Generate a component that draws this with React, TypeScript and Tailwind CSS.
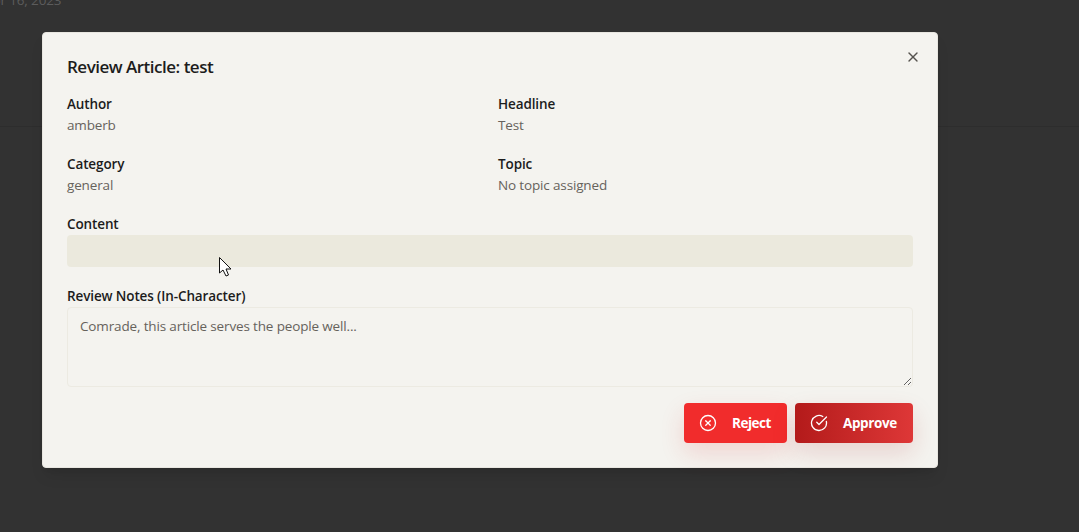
import { X, CircleX, CircleCheckBig } from "lucide-react";

function Field({ label, value }: { label: string; value: string }) {
  return (
    <div className="h-11">
      <div className="text-[13.5px] leading-[20px] font-semibold tracking-[-0.12px] text-[#1c1c1c]">{label}</div>
      <div className="mt-[1px] text-[13.5px] leading-[20px] tracking-[-0.15px] text-[#66625c]">{value}</div>
    </div>
  );
}

export default function App() {
  return (
    <div className="relative h-[532px] w-[1079px] overflow-hidden bg-[#323232] font-['Open_Sans']">
      <div className="flex h-[127px] flex-col border-b border-[#2d2d2d]">
        <div className="-mt-[10px] -ml-[16px] text-[13.5px] leading-[20px] tracking-[-0.15px] text-[#5c5c5c] whitespace-nowrap">Apr 16, 2023</div>
      </div>
      <div className="absolute left-[42px] top-[32px] flex h-[436px] w-[896px] flex-col rounded border border-[#e8e6e0] bg-[#f4f3ef] px-6 pt-6 shadow-lg">
        <button className="absolute right-[16px] top-[16px] text-[#55524e]">
          <X size={16} strokeWidth={2} />
        </button>
        <h2 className="text-[17px] leading-[20px] font-semibold tracking-[-0.5px] text-[#1c1c1c]">Review Article: test</h2>
        <div className="mt-[17px] grid grid-cols-2 gap-x-4 gap-y-4">
          <Field label="Author" value="amberb" />
          <Field label="Headline" value="Test" />
          <Field label="Category" value="general" />
          <Field label="Topic" value="No topic assigned" />
        </div>
        <div className="mt-4 text-[13.5px] leading-[20px] font-semibold tracking-[-0.12px] text-[#1c1c1c]">Content</div>
        <div className="mt-[1px] h-8 rounded-sm bg-[#ebe9dd]" />
        <div className="mt-[19px] text-[13.5px] leading-[20px] font-semibold tracking-[-0.12px] text-[#1c1c1c]">Review Notes (In-Character)</div>
        <textarea
          readOnly
          placeholder="Comrade, this article serves the people well..."
          className="mt-[1px] h-20 w-full rounded-sm border border-[#eceae2] bg-[#f4f3ef] px-3 py-2 text-[13.5px] leading-[20px] tracking-[-0.15px] text-[#66625c] placeholder:text-[#66625c] outline-none"
        />
        <div className="mt-4 flex justify-end gap-2">
          <button className="flex h-10 w-[103px] items-center rounded-sm bg-[#f12c2c] pl-[15px] text-[13.5px] font-bold tracking-[-0.5px] text-white shadow-[0_10px_25px_rgba(220,40,40,0.15)]">
            <CircleX size={18} strokeWidth={1.75} />
            <span className="ml-[15px]">Reject</span>
          </button>
          <button className="flex h-10 w-[118px] items-center rounded-sm bg-gradient-to-r from-[#b31a1a] to-[#de3737] pl-[15px] text-[13.5px] font-bold tracking-[-0.4px] text-white shadow-[0_10px_25px_rgba(170,30,30,0.15)]">
            <CircleCheckBig size={18} strokeWidth={1.75} />
            <span className="ml-[15px]">Approve</span>
          </button>
        </div>
      </div>
      <svg className="absolute left-[219px] top-[257px]" width="14" height="20" viewBox="0 0 14 20">
        <path d="M0.5 0.5 L0.5 16 L4 13 L7 19 L9.5 18 L7 12 L12 12 Z" fill="#fff" stroke="#111" strokeWidth="1" strokeLinejoin="miter" />
      </svg>
    </div>
  );
}
